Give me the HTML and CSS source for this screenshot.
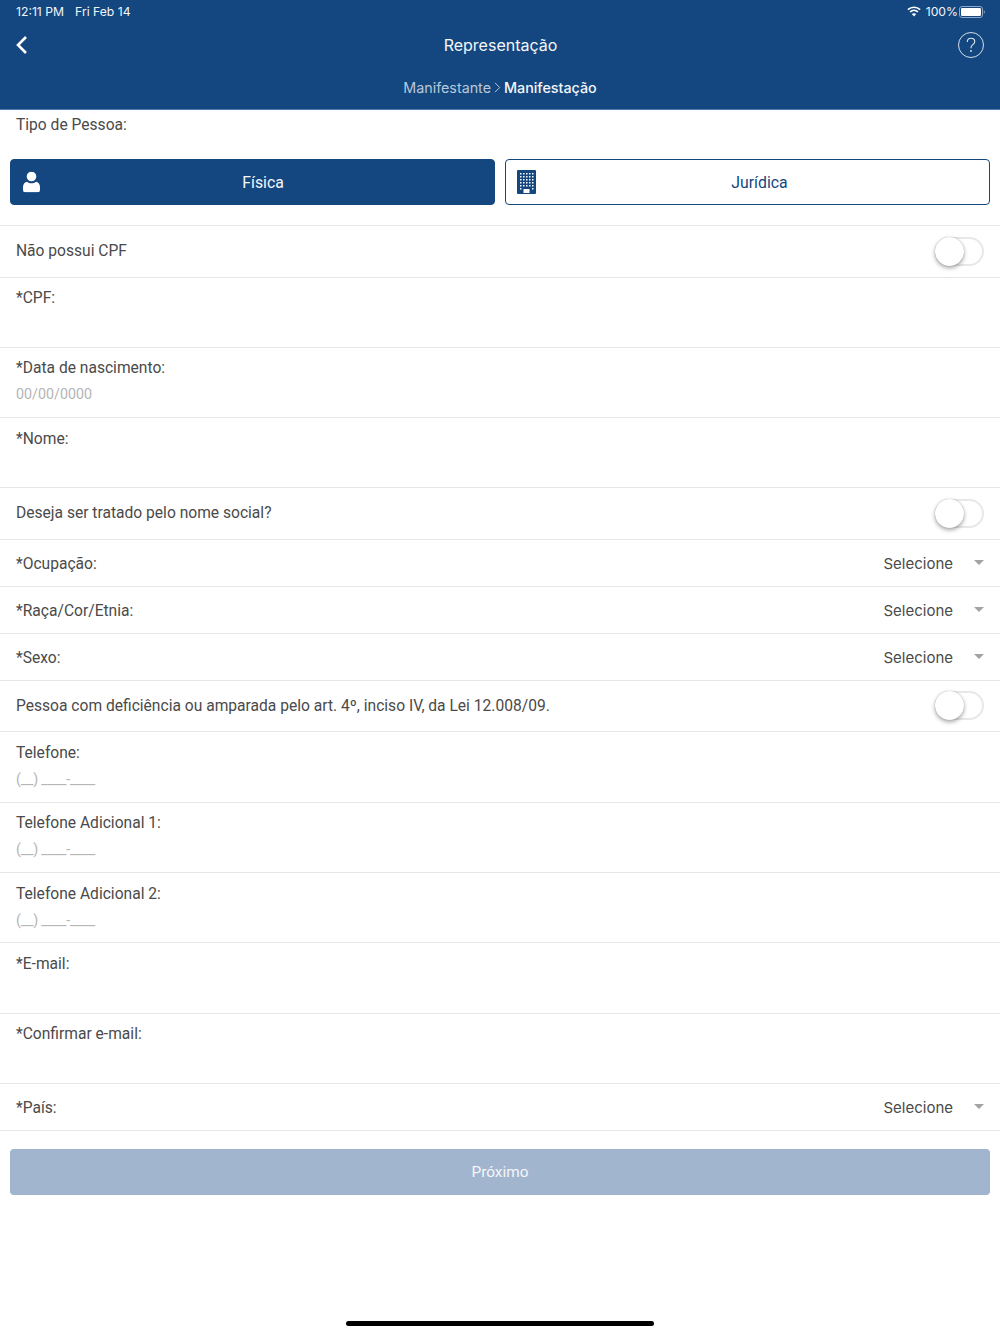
FILE: index.html
```html
<!DOCTYPE html>
<html lang="pt">
<head>
<meta charset="utf-8">
<title>Representação</title>
<link rel="stylesheet" href="styles.css">
</head>
<body>
<div class="page">
  <header class="header">
    <div class="status">
      <div class="status-left"><span>12:11 PM</span><span>Fri Feb 14</span></div>
      <div class="status-right">
        <svg class="wifi" width="14" height="11" viewBox="0 0 14 11"><g fill="none" stroke="#fff" stroke-width="1.700"><path d="M.9 3.700C4.300.4 9.700.4 13.100 3.700"/><path d="M3.100 6C5.300 3.900 8.700 3.900 10.900 6"/></g><path d="M4.800 8.100c1.200-1.200 3.200-1.200 4.400 0L7 10.500z" fill="#fff"/></svg>
        <span>100%</span>
        <svg class="battery" width="26" height="12" viewBox="0 0 26 12"><rect x=".5" y=".5" width="23" height="11" rx="2.500" fill="none" stroke="#8ba6c6"/><rect x="2" y="2" width="20" height="8" rx="1.300" fill="#fff"/><path d="M24.800 4.300c.7.200 1 .8 1 1.700s-.3 1.500-1 1.700z" fill="#8ba6c6"/></svg>
      </div>
    </div>
    <div class="nav">
      <svg class="back" width="13" height="20" viewBox="0 0 13 20"><path d="M10 2 2 10l8 8" fill="none" stroke="#fff" stroke-width="2.600"/></svg>
      <h1 class="title">Representação</h1>
      <svg class="help" width="28" height="28" viewBox="0 0 28 28"><circle cx="14" cy="14" r="12.500" fill="none" stroke="#d5deea" stroke-width="1"/><path d="M10.300 11c0-2.300 1.600-3.700 3.700-3.700s3.700 1.300 3.700 3.200c0 1.500-.8 2.300-1.900 3.100-1.200.9-1.800 1.600-1.800 3.100v.5" fill="none" stroke="#e3e9f1" stroke-width="1.100"/><circle cx="14" cy="20" r=".9" fill="#e3e9f1"/></svg>
    </div>
    <div class="crumbs">
      <span class="crumb-muted">Manifestante</span>
      <svg class="crumb-sep" width="7" height="11" viewBox="0 0 7 11"><path d="m1 .8 4.700 4.700L1 10.200" fill="none" stroke="#b9c7da" stroke-width="1"/></svg>
      <span class="crumb-current">Manifestação</span>
    </div>
  </header>

  <main class="form">
    <div class="type-label">Tipo de Pessoa:</div>
    <div class="type-buttons">
      <button class="type-btn type-btn-on">
        <svg class="type-icon" width="17" height="21" viewBox="0 0 17 21"><circle cx="8.500" cy="5" r="4.800" fill="#fff"/><path d="M0 15.500C0 12.500 2 10.500 4 10.300c1.200 1 2.800 1.500 4.500 1.500s3.300-.5 4.500-1.500c2 .2 4 2.200 4 5.200v3c0 1.300-1 2.300-2.300 2.300H2.300C1 20.800 0 19.800 0 18.500z" fill="#fff"/></svg>
        <span>Física</span>
      </button>
      <button class="type-btn">
        <svg class="type-icon type-icon-building" width="19" height="24" viewBox="0 0 19 24">
          <rect width="19" height="24" rx="1" fill="#14477f"/>
          <g fill="#fff">
            <path d="M3 3h1.500v1.500H3zM6 3h1.500v1.500H6zM9 3h1.500v1.500H9zM12 3h1.500v1.500H12zM15 3h1.500v1.500H15z"/>
            <path d="M3 6h1.500v1.500H3zM6 6h1.500v1.500H6zM9 6h1.500v1.500H9zM12 6h1.500v1.500H12zM15 6h1.500v1.500H15z"/>
            <path d="M3 9h1.500v1.500H3zM6 9h1.500v1.500H6zM9 9h1.500v1.500H9zM12 9h1.500v1.500H12zM15 9h1.500v1.500H15z"/>
            <path d="M3 12h1.500v1.500H3zM6 12h1.500v1.500H6zM9 12h1.500v1.500H9zM12 12h1.500v1.500H12zM15 12h1.500v1.500H15z"/>
            <path d="M3 15h1.500v1.500H3zM6 15h1.500v1.500H6zM9 15h1.500v1.500H9zM12 15h1.500v1.500H12zM15 15h1.500v1.500H15z"/>
            <path d="M3 18h1.500v1.500H3zM15 18h1.500v1.500H15zM6.500 19h6v4h-6z"/>
          </g>
        </svg>
        <span>Jurídica</span>
      </button>
    </div>

    <div class="row row-toggle"><span>Não possui CPF</span><span class="toggle"></span></div>
    <div class="row row-field"><label>*CPF:</label></div>
    <div class="row row-field"><label>*Data de nascimento:</label><span class="placeholder">00/00/0000</span></div>
    <div class="row row-field"><label>*Nome:</label></div>
    <div class="row row-toggle"><span>Deseja ser tratado pelo nome social?</span><span class="toggle"></span></div>
    <div class="row row-select"><span>*Ocupação:</span><span class="select">Selecione<i class="caret"></i></span></div>
    <div class="row row-select"><span>*Raça/Cor/Etnia:</span><span class="select">Selecione<i class="caret"></i></span></div>
    <div class="row row-select"><span>*Sexo:</span><span class="select">Selecione<i class="caret"></i></span></div>
    <div class="row row-toggle"><span>Pessoa com deficiência ou amparada pelo art. 4º, inciso IV, da Lei 12.008/09.</span><span class="toggle"></span></div>
    <div class="row row-field"><label>Telefone:</label><span class="placeholder phone">(__) ____-____</span></div>
    <div class="row row-field"><label>Telefone Adicional 1:</label><span class="placeholder phone">(__) ____-____</span></div>
    <div class="row row-field"><label>Telefone Adicional 2:</label><span class="placeholder phone">(__) ____-____</span></div>
    <div class="row row-field"><label>*E-mail:</label></div>
    <div class="row row-field"><label>*Confirmar e-mail:</label></div>
    <div class="row row-select"><span>*País:</span><span class="select">Selecione<i class="caret"></i></span></div>

    <button class="next">Próximo</button>
  </main>
  <div class="home-bar"></div>
</div>
</body>
</html>
```
FILE: styles.css
```css
* { box-sizing: border-box; }
html, body { margin: 0; padding: 0; background: #fff; }
.page {
  width: 1000px;
  height: 1334px;
  display: flex;
  flex-direction: column;
  overflow: hidden;
  font-family: Roboto, "Liberation Sans", sans-serif;
  font-size: 15.600px;
  color: #4a4a4a;
}
.header {
  height: 110px;
  background: #14477f;
  border-bottom: 1px solid #4f7cae;
  color: #fff;
  flex: none;
}
.status {
  height: 23px;
  padding: 0 15px 0 16px;
  display: flex;
  align-items: center;
  justify-content: space-between;
  font-family: Inter, Roboto, sans-serif;
  font-size: 12.200px;
  color: #f2f5f9;
}
.status-left { display: flex; gap: 11px; }
.status-right { display: flex; align-items: center; gap: 1px; }
.status-right .wifi { margin-right: 4px; }
.nav {
  height: 43px;
  padding: 0 15px 0 16px;
  display: grid;
  grid-template-columns: 1fr auto 1fr;
  align-items: center;
}
.back { display: block; }
.help { display: block; justify-self: end; }
.title {
  margin: 0;
  font-family: Inter, Roboto, sans-serif;
  font-size: 16px;
  font-weight: 400;
  color: #f4f6f9;
}
.crumbs {
  height: 43px;
  display: flex;
  align-items: center;
  justify-content: center;
  gap: 3px;
  font-family: Inter, Roboto, sans-serif;
  font-size: 14.300px;
}
.crumb-muted { color: #bac8da; }
.crumb-current { color: #f4f6f9; font-weight: 500; }
.form { flex: none; }
.type-label {
  height: 49px;
  padding: 5px 16px 0;
  line-height: 20px;
}
.type-buttons {
  display: grid;
  grid-template-columns: 1fr 1fr;
  gap: 10px;
  padding: 0 10px 20px;
  height: 67px;
  border-bottom: 1px solid #e6e6e6;
}
.type-btn {
  height: 46px;
  position: relative;
  border: 1px solid #14477f;
  border-radius: 4px;
  background: #fff;
  color: #14477f;
  font: inherit;
  font-size: 15.800px;
  padding: 0 0 0 24px;
}
.type-btn-on { background: #14477f; color: #f4f6f9; padding-left: 21px; }
.type-icon {
  position: absolute;
  left: 12px;
  top: 50%;
  transform: translateY(-50%);
}
.type-icon-building { left: 11px; }
.row {
  padding: 0 16px;
  border-bottom: 1px solid #e6e6e6;
}
.row-toggle {
  height: 51.500px;
  padding-bottom: .5px;
  display: flex;
  align-items: center;
  justify-content: space-between;
}
.row-field {
  height: 70.330px;
  padding-top: 10.400px;
  display: flex;
  flex-direction: column;
}
.row-field label { line-height: 20px; }
.row-select {
  height: 47px;
  padding-top: 2px;
  display: flex;
  align-items: center;
  justify-content: space-between;
}
.placeholder {
  margin-top: 6px;
  line-height: 20px;
  font-size: 14.300px;
  color: #b5b5b5;
}
.placeholder.phone { letter-spacing: -.2px; }
.toggle {
  position: relative;
  width: 49px;
  height: 29px;
  border: 2px solid #e8e8e8;
  border-radius: 15px;
  background: #fff;
}
.toggle::before {
  content: "";
  position: absolute;
  left: -2px;
  top: -2px;
  width: 29px;
  height: 29px;
  border-radius: 50%;
  background: #fff;
  box-shadow: 0 2px 4px rgba(0,0,0,.35), 0 0 1px rgba(0,0,0,.3);
}
.select {
  display: flex;
  align-items: center;
  margin-top: -1px;
  font-family: Inter, Roboto, sans-serif;
  font-size: 15px;
  color: #4a4a4a;
}
.caret {
  width: 0;
  height: 0;
  margin: -2px 0 0 21px;
  border-left: 5px solid transparent;
  border-right: 5px solid transparent;
  border-top: 5px solid #a3a3a3;
}
.next {
  display: block;
  width: 980px;
  height: 46px;
  margin: 18px 10px 0;
  border: 0;
  border-radius: 4px;
  background: #a1b5cf;
  color: #f4f6f9;
  font: inherit;
  font-size: 15.400px;
}
.home-bar {
  width: 308px;
  height: 5px;
  margin: auto auto 8px;
  border-radius: 3px;
  background: #000;
}
```
